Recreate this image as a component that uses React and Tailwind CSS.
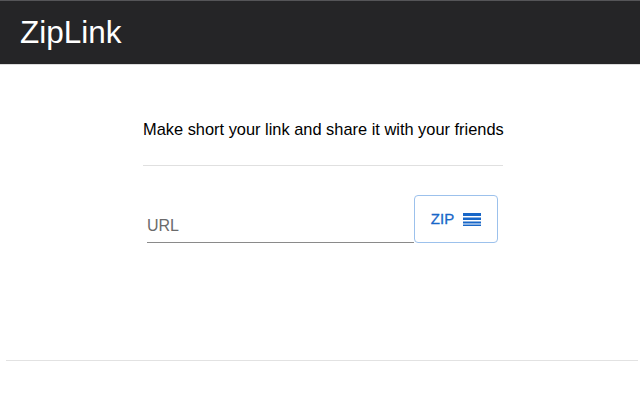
export default function App() {
  return (
    <div className="w-[640px] h-[400px] bg-white font-['Liberation_Sans',Arial,sans-serif] overflow-hidden">
      <header className="h-[65px] bg-[#252527] border-t border-t-[#555558] border-b border-b-[#dcdcdc] flex items-center pl-5">
        <h1 className="text-white text-[31.5px] leading-none mt-[1px]">ZipLink</h1>
      </header>

      <main className="pl-[143px] w-[503px]">
        <p className="mt-[54px] text-[16.4px] leading-[20px] text-black whitespace-nowrap">
          Make short your link and share it with your friends
        </p>
        <div className="mt-[26px] h-px bg-[#e0e0e0]" />

        <div className="mt-[29px] flex items-end pl-1 pr-[5px]">
          <label className="flex-1 border-b border-[#8a8a8a] pb-[4px]">
            <input
              type="text"
              placeholder="URL"
              className="w-full text-[16px] leading-[20px] outline-none placeholder:text-[#6b6b6b]"
            />
          </label>
          <button className="w-[84px] h-[48px] flex items-center justify-center gap-[9px] rounded-[4px] border border-[#9cc1ec] text-[#1867c8] text-[15px] [-webkit-text-stroke:0.3px_#1867c8]">
            ZIP
            <svg width="18" height="13" viewBox="0 0 18 13" fill="#1867c8">
              <rect x="0" y="0" width="18" height="3" />
              <rect x="0" y="4.5" width="18" height="2.5" />
              <rect x="0" y="8.5" width="18" height="2" />
              <rect x="0" y="11.5" width="18" height="1.5" />
            </svg>
          </button>
        </div>
      </main>

      <div className="mt-[117px] ml-[6px] mr-[2px] h-px bg-[#e2e2e2]" />
    </div>
  );
}
